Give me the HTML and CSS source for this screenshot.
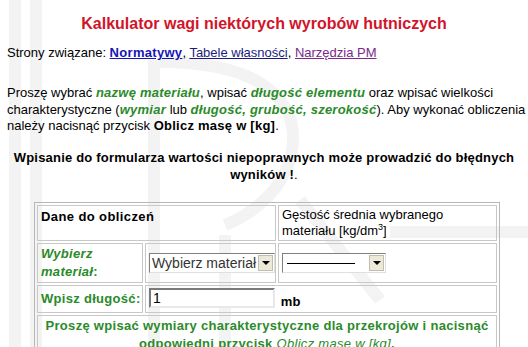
FILE: index.html
```html
<!DOCTYPE html>
<html lang="pl">
<head>
    <meta charset="UTF-8">
    <title>Kalkulator wagi niektórych wyrobów hutniczych</title>
    <link rel="stylesheet" href="styles.css">
</head>
<body>
    <svg class="watermark" width="528" height="347" viewBox="0 0 528 347">
        <g fill="none" stroke="#f3f3f3" stroke-width="12">
            <line x1="15" y1="0" x2="15" y2="347"/>
            <line x1="36" y1="0" x2="36" y2="347"/>
            <line x1="154" y1="60" x2="154" y2="347"/>
            <path d="M160 62 C 260 62, 300 100, 292 150 C 286 190, 250 215, 225 225"/>
            <line x1="225" y1="235" x2="225" y2="347"/>
            <path d="M300 200 L 380 300"/>
            <line x1="390" y1="232" x2="528" y2="232"/>
        </g>
    </svg>

    <h1 class="title">Kalkulator wagi niektórych wyrobów hutniczych</h1>

    <p class="related">Strony związane: <a class="strong" href="#">Normatywy</a>, <a href="#">Tabele własności</a>, <a class="seen" href="#">Narzędzia PM</a></p>

    <p class="intro">Proszę wybrać <em>nazwę materiału</em>, wpisać <em>długość elementu</em> oraz wpisać wielkości charakterystyczne (<em>wymiar</em> lub <em>długość, grubość, szerokość</em>). Aby wykonać obliczenia należy nacisnąć przycisk <b>Oblicz masę w [kg]</b>.</p>

    <p class="warning"><b>Wpisanie do formularza wartości niepoprawnych może prowadzić do błędnych wyników !</b>.</p>

    <table class="calc">
        <colgroup>
            <col class="col-label">
            <col class="col-input">
            <col class="col-density">
        </colgroup>
        <tr class="row-head">
            <td colspan="2" class="head">Dane do obliczeń</td>
            <td class="density">Gęstość średnia wybranego materiału [kg/dm<sup>3</sup>]</td>
        </tr>
        <tr class="row-material">
            <td class="label"><i>Wybierz materiał</i>:</td>
            <td>
                <span class="dropdown wide"><span class="value">Wybierz materiał</span><span class="arrow"></span></span>
            </td>
            <td>
                <span class="dropdown narrow"><span class="value"><span class="rule"></span></span><span class="arrow"></span></span>
            </td>
        </tr>
        <tr class="row-length">
            <td class="label">Wpisz długość:</td>
            <td colspan="2"><input class="field" type="text" value="1"> <b class="unit">mb</b></td>
        </tr>
        <tr>
            <td colspan="3" class="note">Proszę wpisać wymiary charakterystyczne dla przekrojów i nacisnąć odpowiedni przycisk <i>Oblicz masę w [kg]</i>.</td>
        </tr>
    </table>
</body>
</html>
```

FILE: styles.css
```css
body {
    font-family: "Liberation Sans", Arial, sans-serif;
    font-size: 13px;
    color: #000;
    background: #fff;
    margin: 0;
    padding: 0 0 0 7px;
    position: relative;
}

.watermark {
    position: absolute;
    left: 0;
    top: 0;
    z-index: -1;
}

.title {
    color: #d2142a;
    font-size: 16px;
    text-align: center;
    margin: 0;
    padding: 14px 7px 0 0;
    line-height: 20px;
}

.related {
    margin: 11px 0 0;
    line-height: 16px;
}

a {
    color: #1c1c80;
}

a.strong {
    color: #1515b8;
    font-weight: bold;
    letter-spacing: 0.3px;
}

a.seen {
    color: #7a2a8a;
}

.intro {
    margin: 24px 0 0;
    line-height: 16.5px;
}

.intro em,
.intro b {
    letter-spacing: 0.25px;
}

.intro em {
    color: #2b8a2b;
    font-weight: bold;
}

.warning {
    text-align: center;
    line-height: 17px;
    margin: 14px 7px 0 0;
    letter-spacing: 0.2px;
}

.calc {
    margin: 19px 0 0 27px;
    width: 466px;
    table-layout: fixed;
    border: 1px solid #b8b8b8;
    border-spacing: 2px;
}

.col-label {
    width: 106px;
}

.col-input {
    width: 131px;
}

.calc td {
    border: 1px solid #c8c8c8;
    padding: 1px 3px;
    vertical-align: middle;
}

.row-head td {
    vertical-align: top;
    line-height: 16px;
    padding-top: 1px;
}

.head {
    font-weight: bold;
    letter-spacing: 0.4px;
    padding-top: 3px !important;
}

.density sup {
    font-size: 9px;
    line-height: 0;
}

.label {
    color: #2b8a2b;
    font-weight: bold;
    letter-spacing: 0.3px;
    line-height: 18px;
    white-space: nowrap;
}

.row-material .label {
    white-space: normal;
}

.row-material td {
    height: 36px;
}

.row-length td {
    height: 26px;
    padding-top: 0;
    padding-bottom: 0;
}

.dropdown {
    display: inline-flex;
    align-items: center;
    height: 20px;
    box-sizing: border-box;
    border: 1px solid #808080;
    border-color: #808080 #e0e0e0 #e0e0e0 #808080;
    background: #fff;
    font-size: 14px;
    vertical-align: middle;
}

.dropdown.wide {
    width: 126px;
}

.dropdown.narrow {
    width: 104px;
}

.value {
    flex: 1;
    overflow: hidden;
    white-space: nowrap;
    padding-left: 2px;
    color: #333;
}

.rule {
    display: inline-block;
    width: 68px;
    height: 1px;
    background: #000;
    vertical-align: middle;
    margin-left: 2px;
}

.arrow {
    width: 15px;
    height: 16px;
    margin-right: 1px;
    background: #ece9d8;
    border: 1px solid #c0bdae;
    box-sizing: border-box;
    position: relative;
}

.arrow::after {
    content: "";
    position: absolute;
    left: 3px;
    top: 5px;
    border-left: 4px solid transparent;
    border-right: 4px solid transparent;
    border-top: 4px solid #000;
}

.field {
    width: 126px;
    height: 20px;
    box-sizing: border-box;
    border: 2px solid #7a7a7a;
    border-color: #7a7a7a #e8e8e8 #e8e8e8 #7a7a7a;
    font-family: "Liberation Sans", Arial, sans-serif;
    font-size: 14px;
    padding: 0 2px;
    vertical-align: middle;
}

.unit {
    letter-spacing: 0.4px;
    margin-left: 2px;
    vertical-align: -4px;
}

.note {
    text-align: center;
    color: #2b8a2b;
    font-weight: bold;
    letter-spacing: 0.3px;
    line-height: 18px;
}

.note i {
    font-weight: normal;
    font-style: italic;
}
```
